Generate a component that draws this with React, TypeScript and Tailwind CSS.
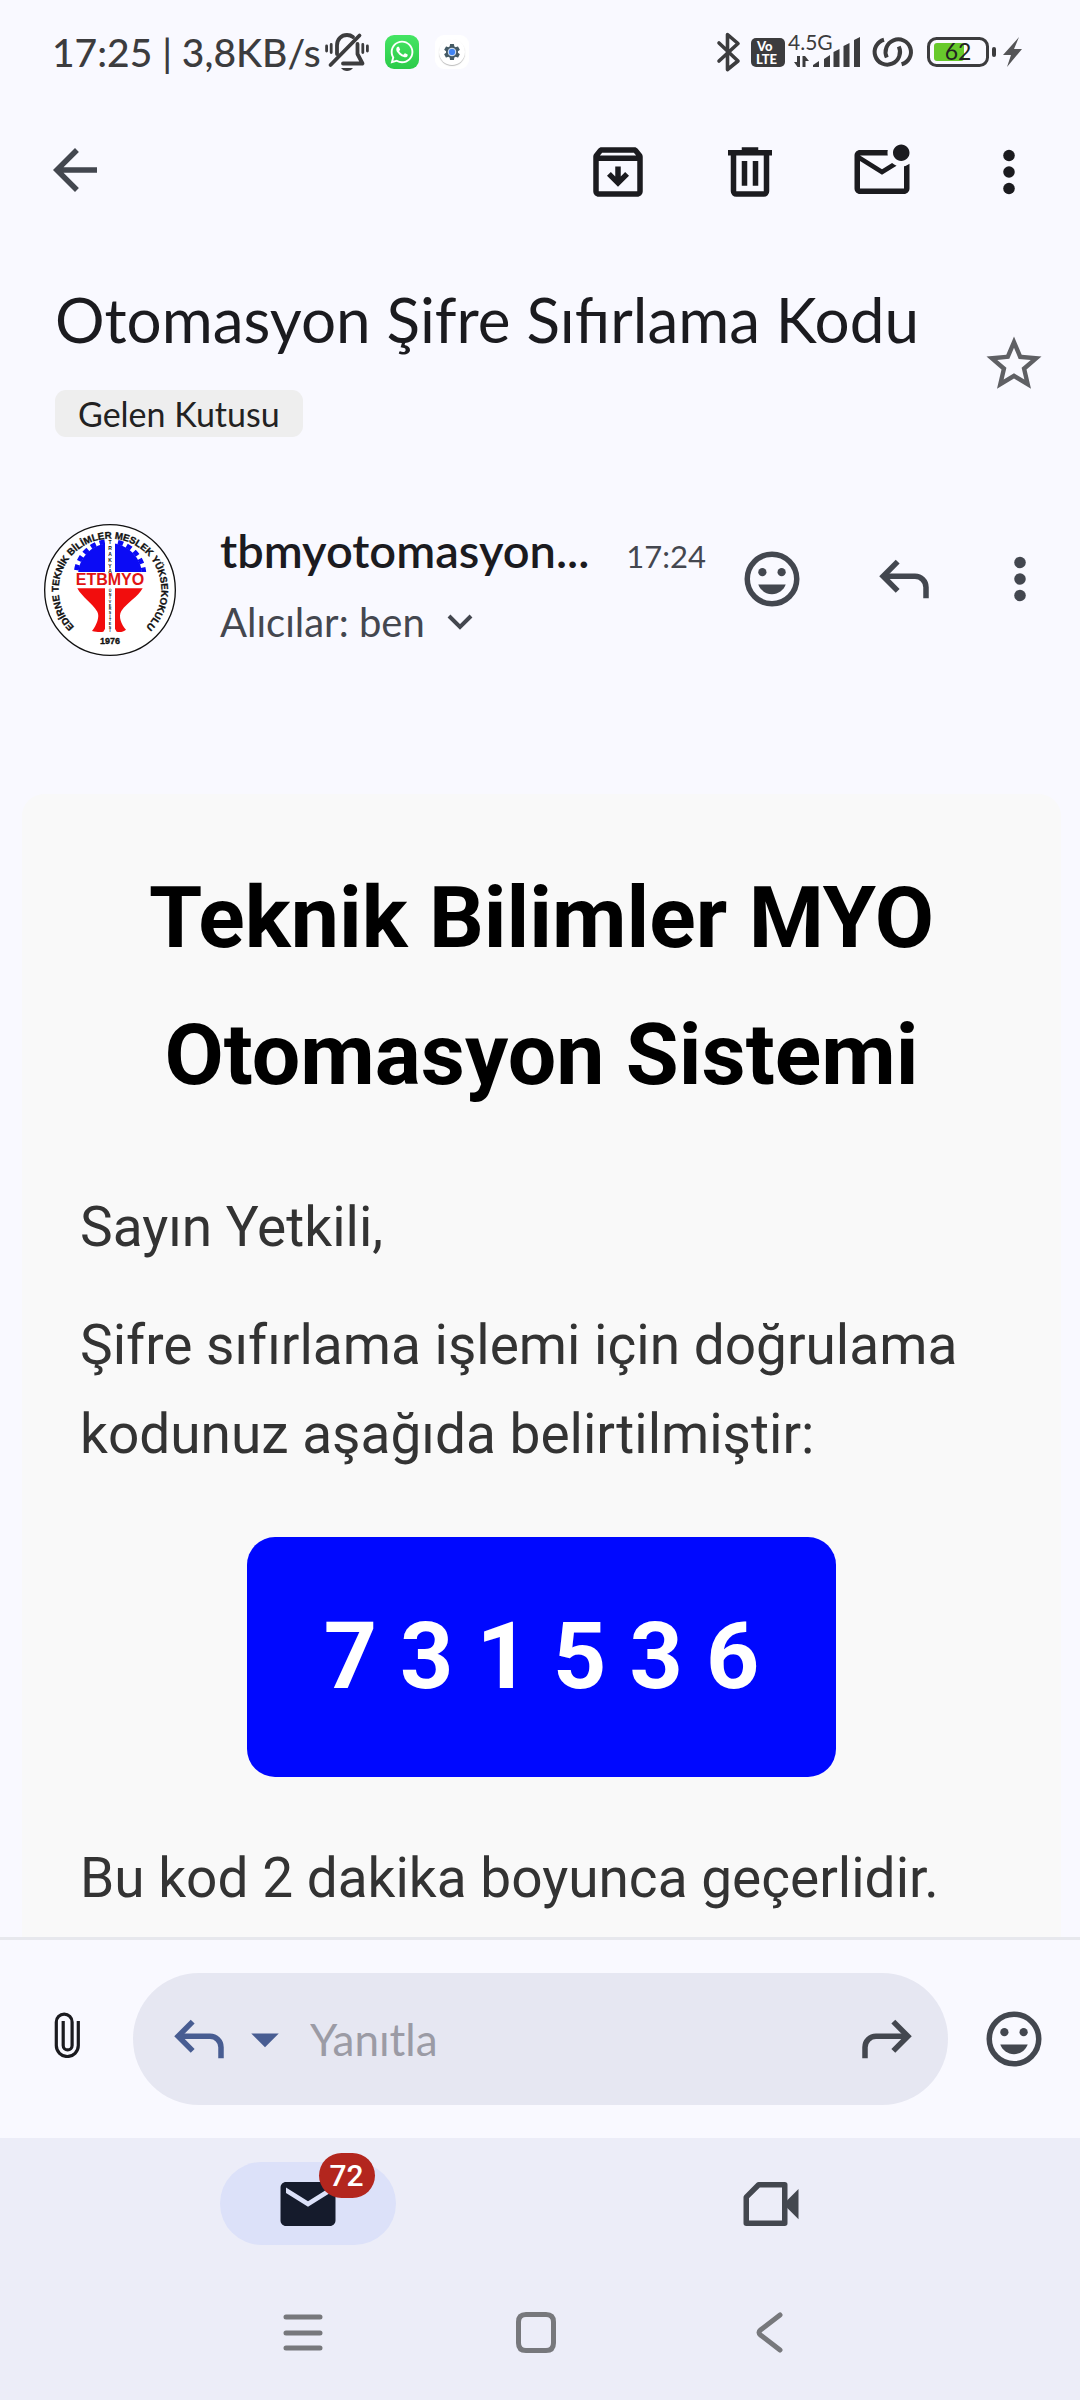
import type { ReactNode } from 'react';
import { FaWhatsapp } from 'react-icons/fa';
import { MdSettings } from 'react-icons/md';

const UI = "font-['Lato',sans-serif]";

function Icon({ children, className = '' }: { children: ReactNode; className?: string }) {
  return (
    <svg viewBox="0 0 24 24" fill="currentColor" aria-hidden="true" className={`size-[66px] shrink-0 ${className}`}>
      {children}
    </svg>
  );
}

function ArchiveIcon() {
  return (
    <Icon>
      <path
        fillRule="evenodd"
        d="m20.54 5.23-1.39-1.68C18.88 3.21 18.47 3 18 3H6c-.47 0-.88.21-1.16.55L3.46 5.23C3.17 5.57 3 6.02 3 6.5V19c0 1.1.9 2 2 2h14c1.1 0 2-.9 2-2V6.5c0-.48-.17-.93-.46-1.27zM6.24 5h11.52l.83 1H5.42l.82-1zM5 19V8h14v11H5zM11 10v3.6L9.4 12 8 13.4l4 4 4-4-1.4-1.4-1.6 1.6V10z"
      />
    </Icon>
  );
}

function TrashIcon() {
  return (
    <Icon>
      <path
        fillRule="evenodd"
        d="M5 6v13a2 2 0 0 0 2 2h10a2 2 0 0 0 2-2V6h1V4h-5V3H9v1H4v2zM7 6h10v13H7zM9 8h2v9H9zM13 8h2v9h-2z"
      />
    </Icon>
  );
}

function UnreadIcon() {
  return (
    <Icon>
      <path d="M22 8.98V18c0 1.1-.9 2-2 2H4c-1.1 0-2-.9-2-2V6c0-1.1.9-2 2-2h10.1c-.06.32-.1.66-.1 1 0 .34.04.68.1 1H4l8 5 3.67-2.29c.47.43 1.02.76 1.63.98L12 13 4 8v10h16V9.9c.74-.15 1.42-.48 2-.92zM16 5c0 1.66 1.34 3 3 3s3-1.34 3-3-1.34-3-3-3-3 1.34-3 3z" />
    </Icon>
  );
}

function MoreIcon() {
  return (
    <Icon>
      <circle cx="12" cy="6" r="2.1" />
      <circle cx="12" cy="12" r="2.1" />
      <circle cx="12" cy="18" r="2.1" />
    </Icon>
  );
}

function BackIcon() {
  return (
    <Icon>
      <path d="M20 11H7.83l5.59-5.59L12 4l-8 8 8 8 1.41-1.41L7.83 13H20v-2z" />
    </Icon>
  );
}

function StarIcon() {
  return (
    <Icon>
      <path d="M22 9.24l-7.19-.62L12 2 9.19 8.63 2 9.24l5.46 4.73L5.82 21 12 17.27 18.18 21l-1.63-7.03L22 9.24zM12 15.4l-3.76 2.27 1-4.28-3.32-2.88 4.38-.38L12 6.1l1.71 4.04 4.38.38-3.32 2.88 1 4.28L12 15.4z" />
    </Icon>
  );
}

function SmileIcon() {
  return (
    <Icon>
      <circle cx="12" cy="12" r="9" fill="none" stroke="currentColor" strokeWidth="2" />
      <circle cx="8.5" cy="9.5" r="1.5" />
      <circle cx="15.5" cy="9.5" r="1.5" />
      <path d="M7 14c.8 2.1 2.7 3.5 5 3.5s4.2-1.4 5-3.5z" />
    </Icon>
  );
}

function ReplyIcon({ className = '' }: { className?: string }) {
  return (
    <Icon className={className}>
      <g fill="none" stroke="currentColor" strokeWidth="2">
        <path d="M9.7 5.7 4.41 11l5.29 5.3" />
        <path d="M4.4 11H16a4 4 0 0 1 4 4v4" />
      </g>
    </Icon>
  );
}

function PaperclipIcon() {
  return (
    <svg viewBox="0 0 26 46" className="h-[46px] w-[26px]" fill="none" stroke="currentColor" strokeWidth="3.2" aria-hidden="true">
      <path d="M24.3 9v24.5a11 11 0 0 1-22 0V10a7.9 7.9 0 0 1 15.8 0v23.5a4.4 4.4 0 0 1-8.9 0V9" />
    </svg>
  );
}

function VideoIcon() {
  return (
    <Icon>
      <path d="M7.5 5H17v14H3V9.5z" fill="none" stroke="currentColor" strokeWidth="2" strokeLinejoin="round" />
      <path d="M22 6.5v11L17 12.5v-1z" />
    </Icon>
  );
}

function MutedBellIcon() {
  return (
    <svg viewBox="0 0 44 40" className="h-10 w-11" fill="none" stroke="currentColor" strokeLinecap="round" aria-hidden="true">
      <g strokeWidth="2.8">
        <path d="M1.6 14v5M6.2 12.5v8M37.8 12.5v8M42.4 14v5" />
      </g>
      <g strokeWidth="3.8" strokeLinejoin="round">
        <path d="M12 22v-8.5C12 7 16.5 3 22 3c2.5 0 4.5.8 6 2" />
        <path d="M32.5 12v10l5 9.5H18" />
        <path d="M5.5 33 34.5 3.5" />
      </g>
      <path d="M16 36h12c-1.5 2-3.5 3-6 3s-4.5-1-6-3z" fill="currentColor" stroke="none" />
    </svg>
  );
}

function StatusBar() {
  return (
    <div className={`flex h-[104px] items-center pr-[58px] pl-[52px] text-[#3c3c3e] ${UI}`}>
      <span className="text-[39px] leading-[48px] font-medium whitespace-nowrap">17:25 | 3,8KB/s</span>
      <span className="ml-1">
        <MutedBellIcon />
      </span>
      <span className="ml-4 flex size-[34px] items-center justify-center rounded-[9px] bg-linear-to-b from-[#45e564] to-[#2bcb48]">
        <FaWhatsapp className="size-[26px] text-white" />
      </span>
      <span className="ml-4 flex size-[34px] items-center justify-center rounded-[9px] bg-white">
        <span className="flex size-[26px] items-center justify-center rounded-full shadow-[0_1px_1px_#bbbbbb]">
          <svg viewBox="0 0 20 20" className="size-5" aria-hidden="true">
            <MdSettings size={20} color="#455a64" />
            <circle cx="10" cy="10" r="3.8" fill="#4285f4" stroke="#dfe8f2" strokeWidth="1" />
          </svg>
        </span>
      </span>
      <span className="grow" />
      <svg viewBox="0 -6 310 56" className="h-14 w-[310px] shrink-0" role="img" aria-label="Bluetooth, VoLTE, 4.5G, 62">
        <path
          d="M7 13 26 31 15.5 39.5v-35L26 13.5 7 31"
          fill="none"
          stroke="#3c3c3e"
          strokeWidth="3.6"
          strokeLinejoin="round"
          strokeLinecap="round"
        />
        <rect x="39" y="8" width="34" height="29" rx="5" fill="#3c3c3e" />
        <g fill="#fff" fontFamily="Lato, sans-serif" fontWeight="900" fontSize="13">
          <text x="45" y="21">Vo</text>
          <text x="44" y="34">LTE</text>
        </g>
        <text x="76" y="20" fontFamily="Lato, sans-serif" fontSize="21" fill="#3c3c3e">
          4.5G
        </text>
        <g fill="#3c3c3e">
          <path d="M88 26v11h-2.5L82 32h3v-6zM90.5 37V26H93l4 5h-3.5v6z" />
          <path d="M101 35l6-4v6h-6zM112 29l6-4v12h-6zM121.5 22l6-3v18h-6zM131.5 16l6-3v24h-6zM142 10l6-3v30h-6z" />
        </g>
        <g fill="none" stroke="#3c3c3e" strokeWidth="4">
          <path d="M172 9.7A12.7 12.7 0 1 0 186.8 16.5" />
          <path d="M189.6 34.3A12.7 12.7 0 1 0 174.8 27.5" />
        </g>
        <rect x="216.5" y="8.5" width="59" height="27" rx="8" fill="none" stroke="#3c3c3e" strokeWidth="3" />
        <rect x="222" y="13" width="30" height="18" rx="3" fill="#67c92c" />
        <rect x="280" y="17" width="4" height="10" rx="2" fill="#3c3c3e" />
        <text x="246" y="30" textAnchor="middle" fontFamily="Lato, sans-serif" fontSize="23" fill="#222">
          62
        </text>
        <path d="M307 7 291 25h8l-4 12 15-18h-8z" fill="#555557" />
      </svg>
    </div>
  );
}

function ToolButton({ label, wide = true, children }: { label: string; wide?: boolean; children: ReactNode }) {
  return (
    <button
      type="button"
      aria-label={label}
      className={`flex shrink-0 items-center justify-center ${wide ? 'w-[132px]' : 'w-[122px]'}`}
    >
      {children}
    </button>
  );
}

function SchoolLogo() {
  const trakya = [133, 150, 168, 186, 203, 219];
  const univ = [276, 287, 298, 309, 320, 331, 342, 353, 364, 375, 386, 397];
  return (
    <svg viewBox="72 72 396 396" className="size-[132px] shrink-0" role="img" aria-label="ETBMYO 1976">
      <defs>
        <path id="ring" d="M270 424a154 154 0 0 1 0-308a154 154 0 0 1 0 308" />
        <clipPath id="upper">
          <rect x="150" y="100" width="240" height="116" />
        </clipPath>
      </defs>
      <circle cx="270" cy="270" r="196" fill="#fff" stroke="#111" strokeWidth="4" />
      <g clipPath="url(#upper)">
        <circle cx="270" cy="226" r="96" fill="#0b0bf5" />
        <circle cx="270" cy="226" r="102" fill="none" stroke="#0b0bf5" strokeWidth="14" strokeDasharray="16 12" />
      </g>
      <path d="M172 265h196c-14 26-46 42-64 68-10 16 0 42 14 56-8 7-18 8-28 6l-6-10h-28l-6 10c-10 2-20 1-34-2 14-18 24-44 16-58-16-26-46-44-60-70z" fill="#f20d0d" />
      <rect x="255" y="112" width="30" height="292" fill="#fff" />
      <rect x="158" y="217" width="224" height="47" fill="#fff" />
      <text x="270" y="255" textAnchor="middle" fontFamily="Liberation Sans, sans-serif" fontWeight="700" fontSize="48" fill="#e01414">
        ETBMYO
      </text>
      <g fontFamily="Liberation Sans, sans-serif" fontWeight="700" fill="#111" textAnchor="middle">
        {'TRAKYA'.split('').map((c, i) => (
          <text key={i} x="270" y={trakya[i]} fontSize="15">
            {c}
          </text>
        ))}
        {'ÜNİVERSİTESİ'.split('').map((c, i) => (
          <text key={i} x="270" y={univ[i]} fontSize="11">
            {c}
          </text>
        ))}
        <text x="270" y="432" fontSize="27" stroke="#111" strokeWidth="1">
          1976
        </text>
        <text fontSize="29" stroke="#111" strokeWidth="1">
          <textPath href="#ring" startOffset="50%">
            EDİRNE TEKNİK BİLİMLER MESLEK YÜKSEKOKULU
          </textPath>
        </text>
      </g>
    </svg>
  );
}

function SenderRow() {
  return (
    <section className="mt-[87px] flex items-start pr-[10px] pl-11">
      <SchoolLogo />
      <div className="ml-11 min-w-0 grow">
        <div className="flex items-baseline justify-between">
          <span className="text-[47px] leading-[52px] font-semibold whitespace-nowrap text-[#1b1b1f]">tbmyotomasyon...</span>
          <span className="text-[31px] leading-[52px] text-[#44474f]">17:24</span>
        </div>
        <button type="button" className="mt-3 flex items-center gap-[22px] text-[40px] leading-[56px] text-[#44474f]">
          Alıcılar: ben
          <svg viewBox="0 0 26 16" className="h-4 w-[26px]" fill="none" stroke="currentColor" strokeWidth="4" aria-hidden="true">
            <path d="M2 2l11 11L24 2" />
          </svg>
        </button>
      </div>
      <div className="flex h-[110px] shrink-0 text-[#43474f]">
        <ToolButton label="İfade ekle">
          <SmileIcon />
        </ToolButton>
        <ToolButton label="Yanıtla">
          <ReplyIcon />
        </ToolButton>
        <button type="button" aria-label="Diğer seçenekler" className="flex w-[100px] items-center justify-center">
          <MoreIcon />
        </button>
      </div>
    </section>
  );
}

function MessageCard() {
  return (
    <article className="mt-[138px] mr-[19px] ml-[22px] grow rounded-t-[22px] bg-[#f9f9f9] px-[58px] pt-[55px] pb-[14px] font-['Roboto',sans-serif] text-[55px] leading-[89px] text-[#333333]">
      <h2 className="text-center text-[86px] leading-[137px] font-bold text-black">Teknik Bilimler MYO Otomasyon Sistemi</h2>
      <p className="mt-[60px]">Sayın Yetkili,</p>
      <p className="mt-[29px]">Şifre sıfırlama işlemi için doğrulama kodunuz aşağıda belirtilmiştir:</p>
      <div className="mt-[58px] flex justify-center">
        <div className="rounded-[28px] bg-[#0008ff] px-[77px] py-[45px] text-[93px] leading-[150px] font-bold text-white">
          7 3 1 5 3 6
        </div>
      </div>
      <p className="mt-[57px]">Bu kod 2 dakika boyunca geçerlidir.</p>
    </article>
  );
}

function ReplyBar() {
  return (
    <form className="flex items-center border-t-3 border-[#e7e8ed] py-[33px]" onSubmit={(e) => e.preventDefault()}>
      <button type="button" aria-label="Dosya ekle" className="flex w-[133px] shrink-0 justify-center pb-2 text-[#1b1b1f]">
        <PaperclipIcon />
      </button>
      <div className="flex h-[132px] min-w-0 grow items-center rounded-full bg-[#e6e7f2] pr-7 pl-[33px]">
        <button type="button" aria-label="Yanıt türü" className="flex shrink-0 text-[#485d92]">
          <ReplyIcon />
          <Icon>
            <path d="M7 10l5 5 5-5z" />
          </Icon>
        </button>
        <input
          type="text"
          aria-label="Yanıtla"
          placeholder="Yanıtla"
          className="min-w-0 grow bg-transparent pl-3 text-[44px] leading-[56px] text-[#1b1b1f] outline-none placeholder:text-[#9b9ba5]"
        />
        <button type="button" aria-label="Yönlendir" className="shrink-0 text-[#43474f]">
          <ReplyIcon className="-scale-x-100" />
        </button>
      </div>
      <button type="button" aria-label="İfade ekle" className="flex w-[132px] shrink-0 justify-center text-[#43474f]">
        <SmileIcon />
      </button>
    </form>
  );
}

function BottomBars() {
  return (
    <footer className="bg-[#ecedf8]">
      <nav className="grid grid-cols-2 pt-6 pr-[78px] pl-[76px]">
        <a
          href="#mail"
          aria-label="Posta, 72 okunmamış"
          className="relative mx-auto flex h-[83px] w-44 items-center justify-center rounded-full bg-[#dce1f9] text-[#151b2c]"
        >
          <Icon>
            <path d="M20 4H4c-1.1 0-1.99.9-1.99 2L2 18c0 1.1.9 2 2 2h16c1.1 0 2-.9 2-2V6c0-1.1-.9-2-2-2zm0 4l-8 5-8-5V6l8 5 8-5v2z" />
          </Icon>
          <span className="absolute -top-[9px] right-[21px] flex h-[45px] w-14 items-center justify-center rounded-full bg-[#b3261e] font-['Roboto',sans-serif] text-[30px] leading-[44px] font-medium text-white">
            72
          </span>
        </a>
        <a href="#meet" aria-label="Meet" className="mx-auto flex h-[83px] w-44 items-center justify-center text-[#43474f]">
          <VideoIcon />
        </a>
      </nav>
      <nav className="mt-[19px] flex h-[136px] items-center justify-center pr-2 text-[#77787c]">
        {[
          { label: 'Son uygulamalar', d: 'M4 7h34M4 23h34M4 38h34' },
          { label: 'Ana ekran', d: 'M11 4.5h20q7.5 0 7.5 7.5v21q0 7.5-7.5 7.5H11q-7.5 0-7.5-7.5V12q0-7.5 7.5-7.5z' },
          { label: 'Geri', d: 'M32 5 12.5 20q-3 2.5 0 5L32 40' },
        ].map((b) => (
          <button key={b.label} type="button" aria-label={b.label} className="flex w-[233px] justify-center">
            <svg
              viewBox="0 0 42 45"
              className="h-[45px] w-[42px]"
              fill="none"
              stroke="currentColor"
              strokeWidth="5"
              strokeLinecap="round"
              aria-hidden="true"
            >
              <path d={b.d} />
            </svg>
          </button>
        ))}
      </nav>
    </footer>
  );
}

export default function App() {
  return (
    <div className={`flex min-h-screen flex-col bg-[#f9f9ff] ${UI}`}>
      <StatusBar />
      <header className="flex h-[136px] items-center pr-[10px] pl-[42px] text-[#1b1b1f]">
        <button type="button" aria-label="Geri" className="mr-auto pb-1 text-[#43474f]">
          <BackIcon />
        </button>
        <ToolButton label="Arşivle">
          <ArchiveIcon />
        </ToolButton>
        <ToolButton label="Sil">
          <TrashIcon />
        </ToolButton>
        <ToolButton label="Okunmadı olarak işaretle">
          <UnreadIcon />
        </ToolButton>
        <ToolButton label="Diğer seçenekler" wide={false}>
          <MoreIcon />
        </ToolButton>
      </header>
      <main className="flex grow flex-col">
        <section className="flex items-center justify-between pt-10 pr-[33px] pl-[55px]">
          <div>
            <h1 className="text-[62px] leading-[78px] text-[#1b1b1f]">Otomasyon Şifre Sıfırlama Kodu</h1>
            <span className="mt-8 inline-block rounded-[11px] bg-[#eeeeee] px-[23px] text-[34px] leading-[47px] text-[#222222]">
              Gelen Kutusu
            </span>
          </div>
          <button type="button" aria-label="Yıldız ekle" className="mt-[10px] text-[#5f6064]">
            <StarIcon />
          </button>
        </section>
        <SenderRow />
        <MessageCard />
      </main>
      <ReplyBar />
      <BottomBars />
    </div>
  );
}
